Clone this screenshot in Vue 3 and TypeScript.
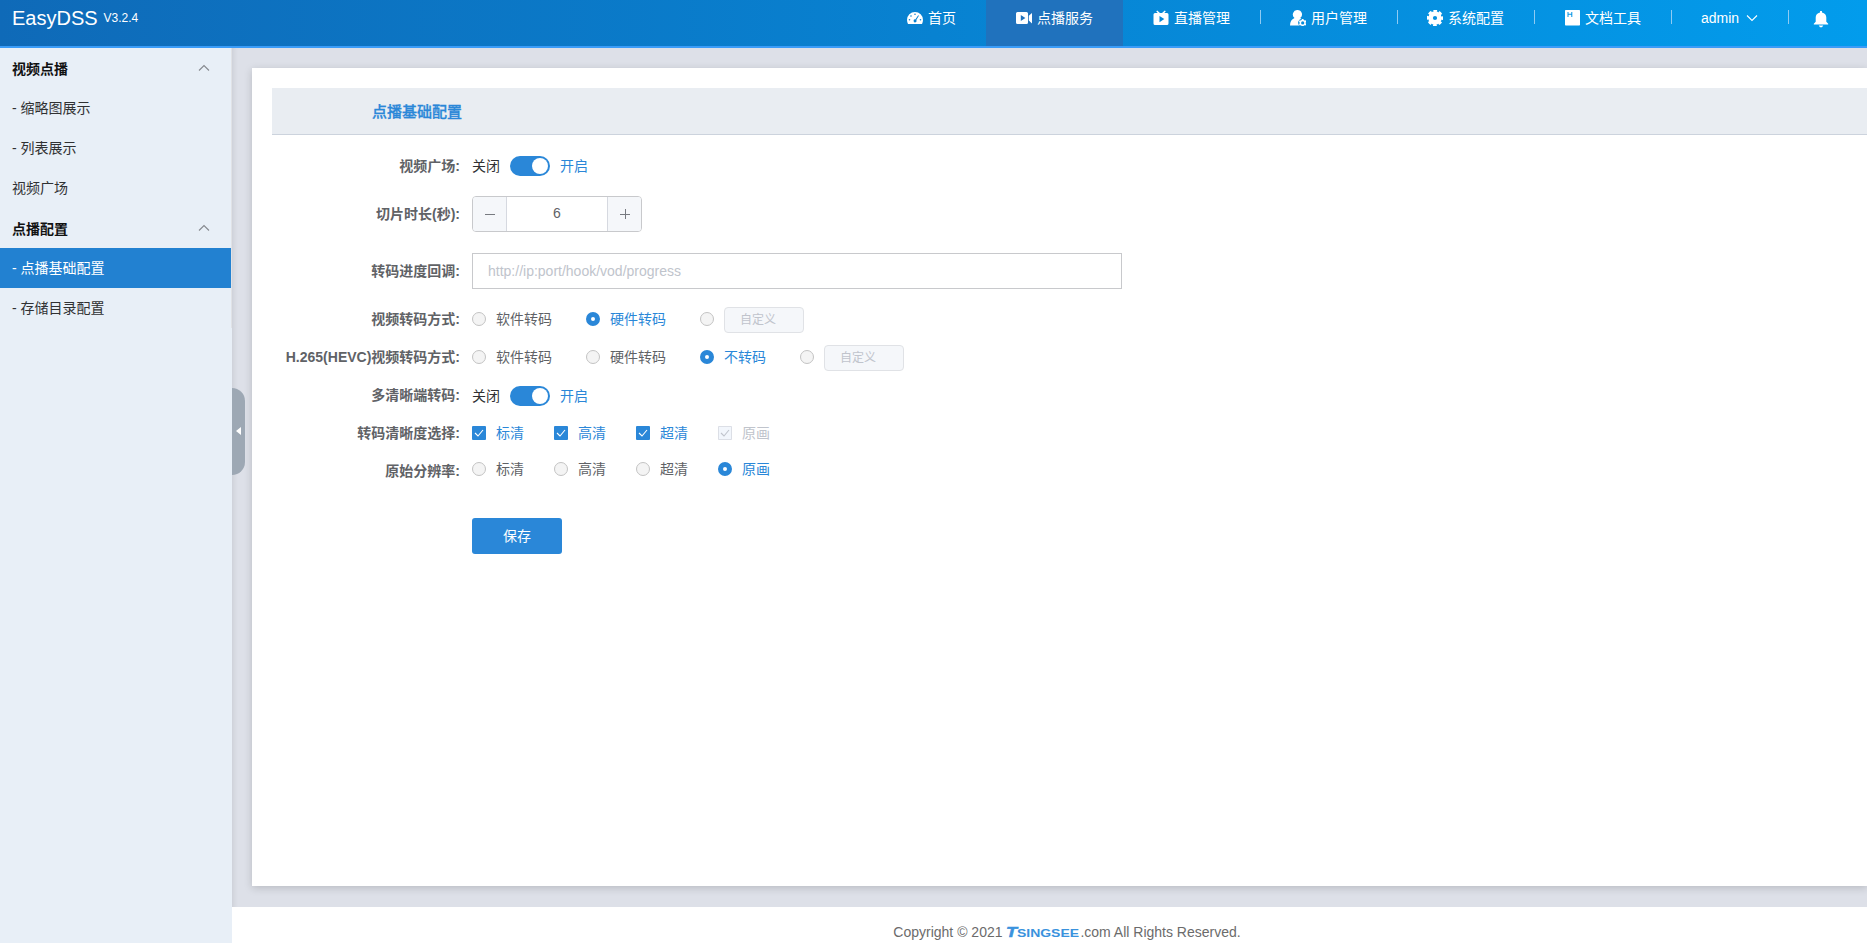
<script setup lang="ts">
import { ref } from 'vue'

interface NavItem { label: string; icon: string; active?: boolean; divider?: boolean }
interface Choice { label: string; custom?: boolean }

const nav: NavItem[] = [
  { label: '首页', icon: 'gauge' },
  { label: '点播服务', icon: 'video', active: true },
  { label: '直播管理', icon: 'tv' },
  { label: '用户管理', icon: 'user', divider: true },
  { label: '系统配置', icon: 'gear', divider: true },
  { label: '文档工具', icon: 'doc', divider: true },
]

const menu = [
  { label: '视频点播', title: true },
  { label: '- 缩略图展示' },
  { label: '- 列表展示' },
  { label: '视频广场' },
  { label: '点播配置', title: true },
  { label: '- 点播基础配置', active: true },
  { label: '- 存储目录配置' },
]

const square = ref(true)
const multi = ref(true)
const duration = ref(6)
const callback = ref('')
const transcode = ref(1)
const hevc = ref(2)
const resolution = ref(3)

const transcodeOptions: Choice[] = [{ label: '软件转码' }, { label: '硬件转码' }, { label: '自定义', custom: true }]
const hevcOptions: Choice[] = [{ label: '软件转码' }, { label: '硬件转码' }, { label: '不转码' }, { label: '自定义', custom: true }]
const levels = ref([
  { label: '标清', on: true, disabled: false },
  { label: '高清', on: true, disabled: false },
  { label: '超清', on: true, disabled: false },
  { label: '原画', on: true, disabled: true },
])
</script>

<template>
  <div class="app">
    <header class="header">
      <div class="brand"><span class="name">EasyDSS</span><span class="version">V3.2.4</span></div>
      <nav class="nav">
        <a v-for="n in nav" :key="n.label" class="nav-item" :class="{ active: n.active, divider: n.divider }">
          <svg class="icon" :class="n.icon" viewBox="0 0 16 16" fill="#fff">
            <path v-if="n.icon === 'gauge'" fill-rule="evenodd" d="M8 2a8 8 0 0 0-8 8c0 1.500.400 2.800 1 4h14c.600-1.200 1-2.500 1-4a8 8 0 0 0-8-8ZM8 3.500a.8.8 0 1 1 0 1.600.8.8 0 0 1 0-1.600ZM4 5.200a.8.8 0 1 1 0 1.600.8.8 0 0 1 0-1.600ZM2.500 9a.8.8 0 1 1 0 1.600.8.8 0 0 1 0-1.600ZM13.500 9a.8.8 0 1 1 0 1.600.8.8 0 0 1 0-1.600ZM11.200 5.200l.700.500L9.300 10a1.500 1.500 0 1 1-1-.600Z" />
            <path v-else-if="n.icon === 'video'" fill-rule="evenodd" d="M1.500 2h9A1.500 1.500 0 0 1 12 3.500v9a1.500 1.500 0 0 1-1.500 1.500h-9A1.500 1.500 0 0 1 0 12.500v-9A1.500 1.500 0 0 1 1.500 2ZM4.800 5v6l4.600-3ZM12.800 5.700 16 3v10.500l-3.200-3Z" />
            <path v-else-if="n.icon === 'tv'" fill-rule="evenodd" d="m3.200 1.300 1-.800L7 3h2L11.800.500l1 .800-1.500 1.700h2.700A1.500 1.500 0 0 1 15.500 4.500v9a1.500 1.500 0 0 1-1.500 1.500h-12A1.500 1.500 0 0 1 .500 13.500v-9A1.500 1.500 0 0 1 2 3h2.700ZM6.500 6v6.200l4.800-3.100Z" />
            <path v-else-if="n.icon === 'user'" fill-rule="evenodd" d="M7.500 0a4.500 4.500 0 0 1 2.700 8.100l1.200.700a4 4 0 0 0-2.100 6.700H0c0-3.800 1.500-6.100 4.500-7.500A4.500 4.500 0 0 1 7.500 0ZM12 9h1.400l.400.900 1 .500.900-.100.700 1.300-.700.900v.900l.600.800-.700 1.200-1-.100-.900.500-.400.900H12l-.500-.900-.800-.500-1 .100L9 14.200l.600-.800v-.900L9 11.600l.7-1.300 1 .1.800-.5ZM12.700 11.300a1.600 1.600 0 1 0 0 3.200 1.600 1.600 0 0 0 0-3.200Z" />
            <g v-else-if="n.icon === 'gear'">
              <circle cx="8" cy="8" r="4.400" fill="none" stroke="#fff" stroke-width="4.600" />
              <circle cx="8" cy="8" r="7" fill="none" stroke="#fff" stroke-width="2.400" stroke-dasharray="3.500 1.998" stroke-dashoffset="1.750" />
            </g>
            <path v-else fill-rule="evenodd" d="M.700 0h13.600a.700.700 0 0 1 .700.700v14.100a.700.700 0 0 1-.700.700H.700a.700.700 0 0 1-.700-.700V.700A.700.700 0 0 1 .700 0ZM2.500 2v5h1V4.700h2.800V7h1V2h-1v1.700H3.500V2Z" />
          </svg>
          <span>{{ n.label }}</span>
        </a>
        <a class="nav-item divider admin">
          <span>admin</span>
          <svg class="chevron" viewBox="0 0 12 8"><path d="m1 1.500 5 5 5-5" /></svg>
        </a>
        <a class="nav-item divider bell">
          <svg viewBox="0 0 16 17" fill="#fff"><path d="M7 1.500V.700a1 1 0 0 1 2 0v.800c2.800.500 4.300 2.500 4.300 5v4.300l1.900 1.900v.800H.8v-.800l1.900-1.900V6.500c0-2.500 1.500-4.500 4.300-5ZM5.700 14.500h4.600L9 16.200H7Z" /></svg>
        </a>
      </nav>
    </header>

    <div class="body">
      <aside class="sidebar">
        <ul class="menu">
          <li v-for="m in menu" :key="m.label" :class="{ title: m.title, active: m.active }">
            <span>{{ m.label }}</span>
            <svg v-if="m.title" class="chevron" viewBox="0 0 12 8"><path d="m1 6.500 5-5 5 5" /></svg>
          </li>
        </ul>
      </aside>

      <div class="main">
        <div class="collapse"><i></i></div>
        <section class="card">
          <h3 class="card-head">点播基础配置</h3>
          <form class="form" @submit.prevent>
            <div class="row">
              <label class="label">视频广场:</label>
              <div class="switch-line" @click="square = !square">
                <span>关闭</span><i class="switch" :class="{ on: square }"></i><span class="lit">开启</span>
              </div>
            </div>
            <div class="row number-row">
              <label class="label">切片时长(秒):</label>
              <div class="stepper">
                <button type="button" @click="duration--"><svg viewBox="0 0 10 10"><path d="M0 5.500h10" /></svg></button>
                <span class="value">{{ duration }}</span>
                <button type="button" @click="duration++"><svg viewBox="0 0 10 10"><path d="M0 5.500h10M5.500 0v10" /></svg></button>
              </div>
            </div>
            <div class="row input-row">
              <label class="label">转码进度回调:</label>
              <input v-model="callback" class="text-input" placeholder="http://ip:port/hook/vod/progress" />
            </div>
            <div class="row">
              <label class="label">视频转码方式:</label>
              <div class="choices wide">
                <span v-for="(o, i) in transcodeOptions" :key="i" class="choice" :class="{ checked: transcode === i }" @click="transcode = i">
                  <i class="radio"></i><input v-if="o.custom" class="custom" disabled :placeholder="o.label" /><span v-else class="text">{{ o.label }}</span>
                </span>
              </div>
            </div>
            <div class="row">
              <label class="label">H.265(HEVC)视频转码方式:</label>
              <div class="choices wide">
                <span v-for="(o, i) in hevcOptions" :key="i" class="choice" :class="{ checked: hevc === i }" @click="hevc = i">
                  <i class="radio"></i><input v-if="o.custom" class="custom" disabled :placeholder="o.label" /><span v-else class="text">{{ o.label }}</span>
                </span>
              </div>
            </div>
            <div class="row">
              <label class="label">多清晰端转码:</label>
              <div class="switch-line lowered" @click="multi = !multi">
                <span>关闭</span><i class="switch" :class="{ on: multi }"></i><span class="lit">开启</span>
              </div>
            </div>
            <div class="row">
              <label class="label">转码清晰度选择:</label>
              <div class="choices">
                <span v-for="l in levels" :key="l.label" class="choice" :class="{ checked: l.on, disabled: l.disabled }">
                  <i class="check"><svg viewBox="0 0 14 14"><path d="m3 7 3 3 5-6" /></svg></i><span class="text">{{ l.label }}</span>
                </span>
              </div>
            </div>
            <div class="row">
              <label class="label">原始分辨率:</label>
              <div class="choices raised">
                <span v-for="(l, i) in levels" :key="l.label" class="choice" :class="{ checked: resolution === i }" @click="resolution = i">
                  <i class="radio"></i><span class="text">{{ l.label }}</span>
                </span>
              </div>
            </div>
            <button type="submit" class="save">保存</button>
          </form>
        </section>
        <footer class="footer">
          <span>Copyright © 2021&nbsp;</span>
          <svg class="logo" viewBox="0 0 74 12">
            <text class="logo-cap" x="0" y="11" textLength="11" lengthAdjust="spacingAndGlyphs">T</text>
            <text class="logo-rest" x="11" y="11" textLength="62" lengthAdjust="spacingAndGlyphs">SINGSEE</text>
          </svg>
          <span>.com All Rights Reserved.</span>
        </footer>
      </div>
    </div>
  </div>
</template>

<style>
body { margin: 0; overflow: hidden; }
</style>

<style scoped>
* { box-sizing: border-box; }
.app {
  height: 943px;
  display: flex;
  flex-direction: column;
  overflow: hidden;
  font-family: "Liberation Sans", "Noto Sans CJK SC", sans-serif;
  font-size: 14px;
  color: #303133;
}
.header {
  height: 48px;
  flex: none;
  display: flex;
  justify-content: space-between;
  border-bottom: 2px solid #3a9cf8;
  background: linear-gradient(90deg, #0f6ab8 0%, #0882d1 50%, #029cec 100%);
  color: #fff;
}
.brand { display: flex; align-items: center; height: 36px; padding-left: 12px; }
.name { font-size: 20px; }
.version { font-size: 12px; margin-left: 6px; }
.nav { display: flex; }
.nav-item {
  width: 137px;
  height: 46px;
  padding: 0 0 10px 30px;
  display: flex;
  align-items: center;
  gap: 5px;
  white-space: nowrap;
}
.nav-item span { padding-bottom: 2px; }
.nav-item:first-child { width: 109px; }
.nav-item.active { background: #2072bd; }
.nav-item.divider { background: linear-gradient(#8fcbf3, #8fcbf3) no-repeat 0 10px / 1px 14px; }
.nav-item .icon { width: 16px; height: 16px; flex: none; }
.nav-item .icon.doc { padding-left: 1px; width: 17px; margin-right: -1px; }
.nav-item.admin { width: 117px; gap: 7px; }
.nav-item.admin span { padding-bottom: 0; }
.nav-item.bell { width: 79px; padding-left: 25px; padding-bottom: 8px; }
.bell svg { width: 16px; height: 17px; }
.chevron { width: 12px; height: 8px; fill: none; stroke: #fff; stroke-width: 1.1; }

.body { flex: 1; display: flex; min-height: 0; }
.sidebar { width: 232px; flex: none; background: #e8eff7; }
.menu { list-style: none; margin: 0; padding: 0; border-right: 1px solid #e0e2e6; }
.menu li {
  height: 40px;
  padding: 0 21px 0 12px;
  display: flex;
  align-items: center;
  justify-content: space-between;
}
.menu li span { padding-bottom: 2px; }
.menu li.title { font-weight: bold; color: #111; padding-top: 1px; }
.menu li.active { background: #2281d1; color: #fff; }
.menu .chevron { stroke: #85888e; margin-bottom: 2px; }

.main {
  position: relative;
  flex: 1;
  min-width: 0;
  display: flex;
  flex-direction: column;
  background: #dde0e8;
  box-shadow: inset 5px 0 5px -3px rgba(0, 0, 0, 0.08);
}
.collapse {
  position: absolute;
  left: 0;
  top: 340px;
  width: 13px;
  height: 87px;
  border-radius: 0 13px 13px 0;
  background: #9da8b4;
  display: flex;
  align-items: center;
  padding: 0 0 1px 4px;
}
.collapse i { border: 4px solid transparent; border-right: 5px solid #fff; border-left: 0; }
.card {
  height: 818px;
  margin: 20px 0 21px 20px;
  padding: 20px 0 0 20px;
  background: #fff;
  box-shadow: 0 2px 8px rgba(0, 0, 0, 0.17);
}
.card-head {
  height: 47px;
  margin: 0;
  padding-left: 100px;
  line-height: 47px;
  font-size: 15px;
  font-weight: 500;
  color: #2a87d8;
  -webkit-text-stroke: 0.3px #2a87d8;
  background: #e9edf2;
  border-bottom: 1px solid #ccd3dd;
}
.form { padding-top: 12px; }
.row { height: 38px; display: flex; align-items: center; }
.label {
  width: 188px;
  margin-right: 12px;
  padding-bottom: 2px;
  text-align: right;
  white-space: nowrap;
  font-weight: bold;
  color: #606266;
}
.number-row { height: 36px; margin: 11px 0 21px; }
.input-row { height: 36px; margin-bottom: 11px; }
.switch-line { display: flex; align-items: center; gap: 10px; }
.switch-line span { padding-bottom: 2px; }
.switch-line.lowered { padding-top: 1px; }
.lit { color: #2a87d8; }
.switch {
  width: 40px;
  height: 20px;
  border-radius: 10px;
  background: #c0c4cc;
  padding: 2px;
  display: flex;
}
.switch::after { content: ""; width: 16px; height: 16px; border-radius: 50%; background: #fff; }
.switch.on { background: #2a87d8; justify-content: flex-end; }
.stepper {
  width: 170px;
  height: 36px;
  display: flex;
  border: 1px solid #c8c9cc;
  border-radius: 4px;
  overflow: hidden;
  color: #606266;
}
.stepper button { width: 34px; padding: 0; border: 0; background: #f5f7fa; display: grid; place-items: center; }
.stepper button:first-child { border-right: 1px solid #d6d9e0; }
.stepper button:last-child { border-left: 1px solid #d6d9e0; }
.stepper svg { width: 10px; height: 10px; stroke: #777a80; fill: none; }
.value { flex: 1; text-align: center; line-height: 33px; }
.text-input {
  width: 650px;
  height: 36px;
  padding: 0 15px;
  border: 1px solid #c8c9cc;
  outline: none;
  background: #fff;
  font: inherit;
}
.text-input::placeholder, .custom::placeholder { color: #c0c4cc; opacity: 1; }
.choices { display: flex; align-items: center; gap: 30px; color: #606266; }
.choices.wide { gap: 34px; }
.choices.raised { margin-bottom: 4px; }
.choice { display: flex; align-items: center; gap: 10px; height: 28px; white-space: nowrap; }
.choice .text { padding-bottom: 2px; }
.choice.checked { color: #2a87d8; }
.choice.disabled { color: #c0c4cc; }
.radio { width: 14px; height: 14px; border: 1px solid #c3c3c3; border-radius: 50%; background: #f4f4f4; }
.checked .radio { border: 5px solid #2a87d8; background: #fff; }
.check { width: 14px; height: 14px; border-radius: 1px; background: #2a87d8; display: flex; }
.check svg { width: 14px; height: 14px; fill: none; stroke: #fff; stroke-width: 1.1; }
.disabled .check { background: #f2f6fc; box-shadow: inset 0 0 0 1px #dcdfe6; }
.disabled .check svg { stroke: #c0c4cc; }
.custom {
  width: 80px;
  height: 26px;
  margin-top: 2px;
  padding: 0 15px;
  border: 1px solid #e0e2e6;
  border-radius: 4px;
  background: #f5f7fa;
  font-family: inherit;
  font-size: 12px;
}
.save {
  display: block;
  width: 90px;
  height: 36px;
  margin: 28px 0 0 200px;
  padding: 0 0 2px;
  border: 0;
  border-radius: 3px;
  background: #2a87d8;
  color: #fff;
  font-family: inherit;
  font-size: 14px;
}
.footer {
  flex: 1;
  display: flex;
  align-items: center;
  justify-content: center;
  padding: 14px 0 0 35px;
  background: #fff;
  color: #6b6b6b;
  white-space: nowrap;
}
.logo { width: 74px; height: 12px; overflow: visible; fill: #3a92dd; font-weight: bold; }
.logo-cap { font-size: 14px; font-style: italic; stroke: #3a92dd; stroke-width: 0.5; }
.logo-rest { font-size: 10px; }
</style>
